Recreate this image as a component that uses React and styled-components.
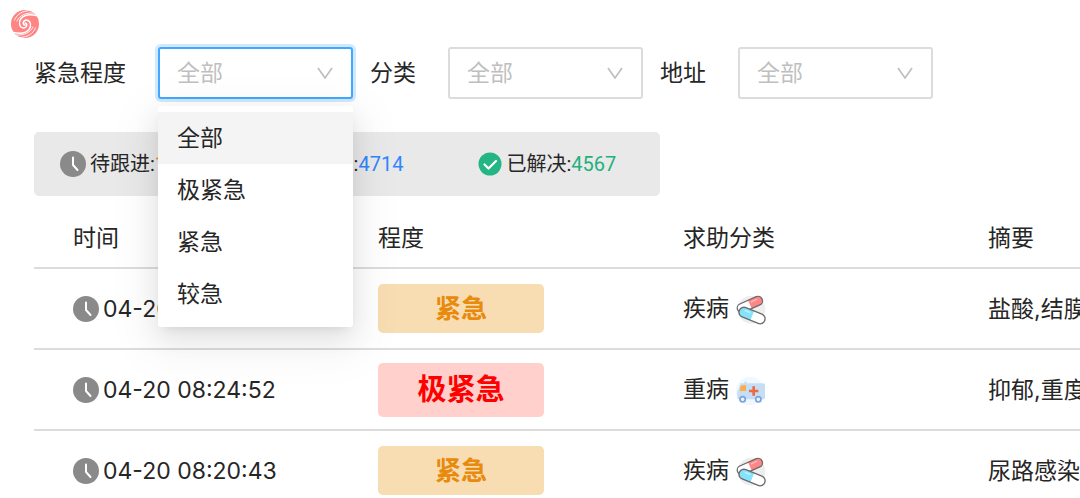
import { useState } from "react";
import styled, { createGlobalStyle, css } from "styled-components";

const LEVELS = ["全部", "极紧急", "紧急", "较急"];

const FILTERS = [
  { id: "level", label: "紧急程度", options: LEVELS },
  { id: "category", label: "分类", options: ["全部", "疾病", "重病"] },
  { id: "address", label: "地址", options: ["全部"] },
];

const ROWS = [
  {
    id: 1,
    time: "04-20 08:31:17",
    level: "紧急",
    category: "疾病",
    summary: "盐酸,结膜炎",
  },
  {
    id: 2,
    time: "04-20 08:24:52",
    level: "极紧急",
    category: "重病",
    summary: "抑郁,重度失眠",
  },
  {
    id: 3,
    time: "04-20 08:20:43",
    level: "紧急",
    category: "疾病",
    summary: "尿路感染,发烧",
  },
];

const LogoArm = (props) => (
  <g fill="none" stroke="#fff" strokeLinecap="round" {...props}>
    <path
      strokeWidth="2.8"
      d="M30 32C25 31 25 23 33 22C41 23 44 33 38 41C32 48 20 50 7 47"
    />
    <path strokeWidth="1.8" d="M46 36C41 47 29 53 13 52" />
    <path strokeWidth="1.8" d="M51 38C46 50 35 56 21 57" />
  </g>
);

const Logo = () => (
  <svg width="30" height="30" viewBox="0 0 60 60" aria-hidden="true">
    <circle cx="30" cy="30" r="28" fill="#ff8585" />
    <LogoArm />
    <LogoArm transform="rotate(180 30 30)" />
  </svg>
);

const ClockIcon = () => (
  <svg width="26" height="26" viewBox="0 0 26 26" aria-hidden="true">
    <circle cx="13" cy="13" r="13" fill="#8a8a8a" />
    <path
      d="M13 6.5V14l4.5 5"
      fill="none"
      stroke="#fff"
      strokeWidth="2"
      strokeLinecap="round"
      strokeLinejoin="round"
    />
  </svg>
);

const ProgressIcon = () => (
  <svg width="26" height="26" viewBox="0 0 26 26" aria-hidden="true">
    <circle cx="13" cy="13" r="13" fill="#2f86ff" />
    <path d="M8 13h10" stroke="#fff" strokeWidth="2" strokeLinecap="round" />
  </svg>
);

const CheckIcon = () => (
  <svg width="24" height="24" viewBox="0 0 24 24" aria-hidden="true">
    <circle cx="12" cy="12" r="11.5" fill="#24b585" />
    <path
      d="M6.5 12.5l4 4 7.5-7.5"
      fill="none"
      stroke="#fff"
      strokeWidth="2.2"
      strokeLinecap="round"
      strokeLinejoin="round"
    />
  </svg>
);

const PillIcon = () => (
  <Emoji viewBox="0 0 90 90" aria-hidden="true">
    <circle cx="46" cy="44" r="42" fill="#eeeeee" />
    <g transform="rotate(-24 41 27)">
      <rect x="1" y="15" width="80" height="27" rx="13" fill="#fff" />
      <path d="M41 15h27a13 13 0 0 1 0 27H41z" fill="#ff8587" />
      <path d="M48 23h18" stroke="#ffb9ba" strokeWidth="4" strokeLinecap="round" />
      <rect
        x="1"
        y="15"
        width="80"
        height="27"
        rx="13"
        fill="none"
        stroke="#6b6b6b"
        strokeWidth="4"
      />
    </g>
    <g transform="rotate(22 49 62)">
      <rect x="7" y="47" width="82" height="30" rx="15" fill="#fff" />
      <path d="M49 47H22a15 15 0 0 0 0 30h27z" fill="#84e3fb" />
      <path d="M24 56h14" stroke="#c4f3ff" strokeWidth="4" strokeLinecap="round" />
      <rect
        x="7"
        y="47"
        width="82"
        height="30"
        rx="15"
        fill="none"
        stroke="#6b6b6b"
        strokeWidth="4"
      />
    </g>
  </Emoji>
);

const AmbulanceIcon = () => (
  <Emoji viewBox="0 0 90 90" aria-hidden="true">
    <circle cx="42" cy="45" r="42" fill="#eff8fe" />
    <rect x="25" y="16" width="7" height="8" rx="3" fill="#c4e2f2" />
    <path
      d="M16 22h66q5 0 5 5v38q0 5-5 5H9q-5 0-5-5V52q0-8 4-14l4-12q1-4 4-4z"
      fill="#c5def6"
    />
    <path d="M18 28h12v17H12q0-17 6-17z" fill="#ffab45" />
    <path d="M53 31v28M39 45h28" stroke="#ea6a43" strokeWidth="8" />
    <g fill="#eaf3fc" stroke="#7ba3db" strokeWidth="5">
      <circle cx="20" cy="70" r="8" />
      <circle cx="67" cy="70" r="8" />
    </g>
  </Emoji>
);

const Chevron = () => (
  <Arrow viewBox="0 0 16 12" aria-hidden="true">
    <path d="M1 1l7 10 7-10" fill="none" stroke="#bfbfbf" strokeWidth="1.7" />
  </Arrow>
);

const App = () => {
  const [open, setOpen] = useState("level");
  const [values, setValues] = useState({
    level: "全部",
    category: "全部",
    address: "全部",
  });

  const pick = (id, value) => {
    setValues({ ...values, [id]: value });
    setOpen(null);
  };

  return (
    <Page>
      <GlobalStyle />
      <Header>
        <Logo />
      </Header>

      <Filters>
        {FILTERS.map((f) => (
          <Filter key={f.id}>
            <Label htmlFor={f.id}>{f.label}</Label>
            <SelectBox>
              <Select
                id={f.id}
                $active={open === f.id}
                value={values[f.id]}
                onChange={(e) => pick(f.id, e.target.value)}
              >
                {f.options.map((o) => (
                  <option key={o}>{o}</option>
                ))}
              </Select>
              <Chevron />
              {open === f.id && (
                <Menu role="listbox" aria-label={f.label}>
                  {f.options.map((o) => (
                    <Option
                      key={o}
                      role="option"
                      aria-selected={values[f.id] === o}
                      onClick={() => pick(f.id, o)}
                    >
                      {o}
                    </Option>
                  ))}
                </Menu>
              )}
            </SelectBox>
          </Filter>
        ))}
      </Filters>

      <Stats>
        <Stat>
          <ClockIcon />
          <span>
            待跟进:<Count $color="#e88a0c">147</Count>
          </span>
        </Stat>
        <Stat>
          <ProgressIcon />
          <span>
            跟进中:<Count $color="#2f86ff">4714</Count>
          </span>
        </Stat>
        <Stat>
          <CheckIcon />
          <span>
            已解决:<Count $color="#24b07c">4567</Count>
          </span>
        </Stat>
      </Stats>

      <Table>
        <thead>
          <tr>
            <th>时间</th>
            <th>程度</th>
            <th>求助分类</th>
            <th>摘要</th>
          </tr>
        </thead>
        <tbody>
          {ROWS.map((row) => (
            <tr key={row.id}>
              <td>
                <Time>
                  <ClockIcon />
                  {row.time}
                </Time>
              </td>
              <td>
                <Tag $critical={row.level === "极紧急"}>{row.level}</Tag>
              </td>
              <td>
                {row.category}
                {row.category === "重病" ? <AmbulanceIcon /> : <PillIcon />}
              </td>
              <td>{row.summary}</td>
            </tr>
          ))}
        </tbody>
      </Table>
    </Page>
  );
};

export default App;

const GlobalStyle = createGlobalStyle`
  *, *::before, *::after {
    box-sizing: border-box;
  }
  body {
    margin: 0;
    background: #fff;
    color: #262626;
    font-family: Inter, "Noto Sans CJK SC", sans-serif;
    font-size: 23px;
    line-height: 32px;
  }
`;

const Page = styled.main`
  height: 100vh;
  overflow: hidden;
`;

const Header = styled.header`
  display: flex;
  padding: 9px 10px 8px;
`;

const Filters = styled.div`
  display: flex;
  gap: 17px;
  padding: 0 34px;
`;

const Filter = styled.div`
  display: flex;
  align-items: center;
`;

const Label = styled.label`
  padding-right: 32px;
  white-space: nowrap;
`;

const SelectBox = styled.div`
  position: relative;
  width: 195px;
`;

const Select = styled.select`
  display: block;
  width: 100%;
  height: 52px;
  padding: 0 40px 0 17px;
  appearance: none;
  outline: none;
  background: #fff;
  border: 2px solid #dcdcdc;
  border-radius: 3px;
  color: #bfbfbf;
  font: inherit;

  ${({ $active }) =>
    $active &&
    css`
      border-color: #40a9ff;
      box-shadow: 0 0 0 3px rgba(24, 144, 255, 0.2);
    `}
`;

const Arrow = styled.svg`
  position: absolute;
  top: 20px;
  right: 20px;
  width: 16px;
  height: 12px;
  pointer-events: none;
`;

const Menu = styled.ul`
  position: absolute;
  z-index: 2;
  top: 100%;
  left: 0;
  width: 100%;
  margin: 7px 0 0;
  padding: 6px 0 7px;
  list-style: none;
  background: #fff;
  border-radius: 3px;
  box-shadow:
    0 5px 10px -6px rgba(0, 0, 0, 0.12),
    0 10px 26px rgba(0, 0, 0, 0.08),
    0 14px 45px 12px rgba(0, 0, 0, 0.05);
`;

const Option = styled.li`
  padding: 10px 19px;
  cursor: pointer;

  &[aria-selected="true"] {
    background: #f4f4f4;
  }
`;

const Stats = styled.section`
  display: flex;
  gap: 75px;
  width: fit-content;
  margin: 33px 34px 0;
  padding: 16px 44px 16px 26px;
  background: #e9e9e9;
  border-radius: 5px;
  font-family: Roboto, "Noto Sans CJK SC", sans-serif;
  font-size: 20px;
`;

const Stat = styled.div`
  display: flex;
  align-items: center;
  gap: 4px;
  white-space: nowrap;
`;

const Count = styled.span`
  color: ${({ $color }) => $color};
`;

const Table = styled.table`
  width: 100%;
  min-width: 1220px;
  margin: 12px 0 0 34px;
  table-layout: fixed;
  border-collapse: separate;
  border-spacing: 0;

  th,
  td {
    padding: 0 0 0 39px;
    border-bottom: 2px solid #dcdcdc;
    text-align: left;
    font-weight: 400;
    white-space: nowrap;
  }
  th {
    height: 61px;
  }
  td {
    height: 81px;
  }
`;

const Time = styled.div`
  display: flex;
  align-items: center;
  gap: 4px;
`;

const Tag = styled.div`
  width: 166px;
  padding: 6px 0;
  border-radius: 5px;
  background: #f8dcb2;
  color: #e88a0c;
  font-size: 26px;
  font-weight: 700;
  line-height: 37px;
  text-align: center;

  ${({ $critical }) =>
    $critical &&
    css`
      background: #ffd0cc;
      color: #ff0000;
      font-size: 29px;
      line-height: 42px;
    `}
`;

const Emoji = styled.svg`
  width: 30px;
  height: 30px;
  margin-left: 7px;
  vertical-align: middle;
`;
